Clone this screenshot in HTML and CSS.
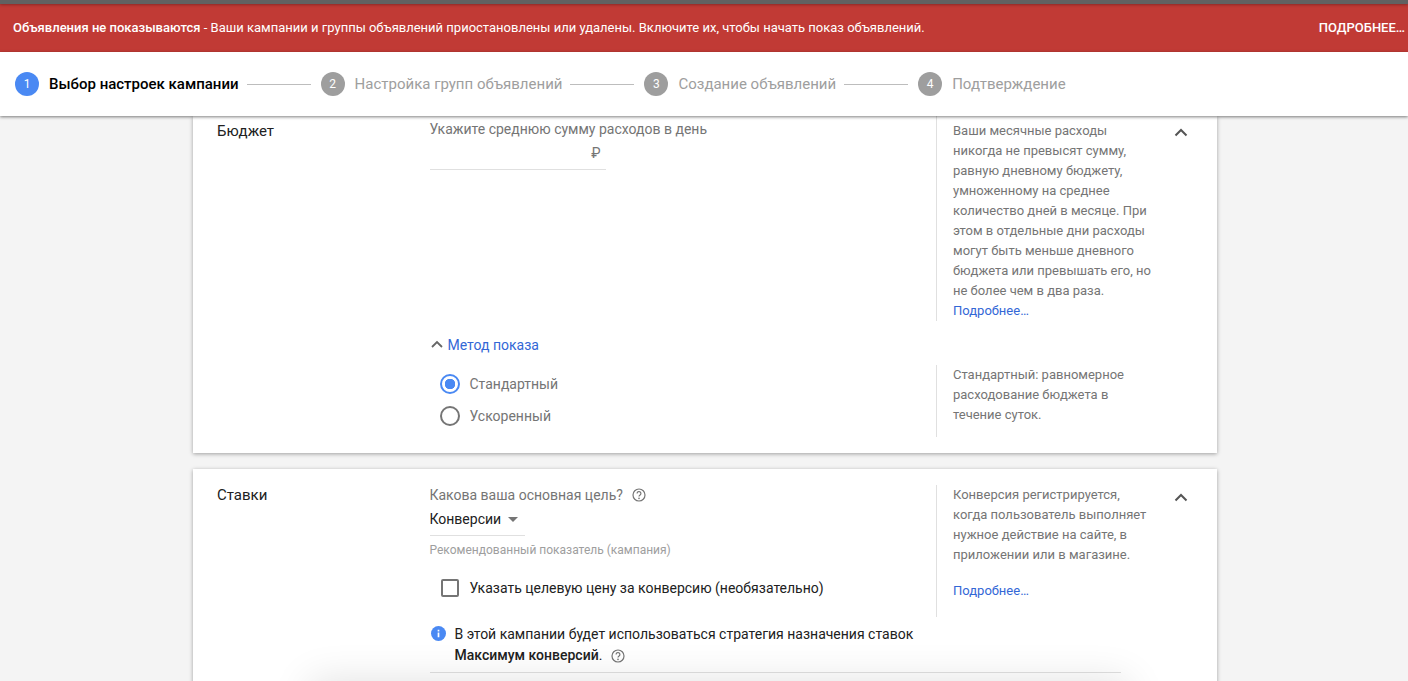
FILE: index.html
```html
<!DOCTYPE html>
<html lang="ru">

<head>
	<meta charset="UTF-8">
	<title>Новая кампания</title>
	<link rel="stylesheet" href="styles.css">
</head>

<body>
	<div class="top-line"></div>
	<div class="alert">
		<div class="alert-text"><b>Объявления не показываются</b> - Ваши кампании и группы объявлений приостановлены или удалены. Включите их, чтобы начать показ объявлений.</div>
		<div class="alert-more">ПОДРОБНЕЕ…</div>
	</div>
	<div class="stepper">
		<div class="step active"><span class="step-num">1</span><span class="step-name">Выбор настроек кампании</span></div>
		<div class="step-line"></div>
		<div class="step"><span class="step-num">2</span><span class="step-name">Настройка групп объявлений</span></div>
		<div class="step-line"></div>
		<div class="step"><span class="step-num">3</span><span class="step-name">Создание объявлений</span></div>
		<div class="step-line"></div>
		<div class="step"><span class="step-num">4</span><span class="step-name">Подтверждение</span></div>
	</div>

	<div class="content">
		<section class="card card-budget">
			<div class="card-title">Бюджет</div>
			<div class="card-body">
				<div class="row">
					<div class="row-main budget-main">
						<div class="field-label">Укажите среднюю сумму расходов в день</div>
						<div class="money-input">₽</div>
					</div>
					<div class="help budget-help">
						Ваши месячные расходы никогда не превысят сумму, равную дневному бюджету, умноженному на среднее количество дней в месяце. При этом в отдельные дни расходы могут быть меньше дневного бюджета или превышать его, но не более чем в два раза.
						<a class="more" href="#">Подробнее…</a>
					</div>
				</div>
				<div class="row method-row">
					<div class="row-main">
						<div class="method-toggle">
							<svg class="chevron-small" width="14" height="9" viewBox="0 0 14 9"><path d="M2 7l5-5 5 5" fill="none" stroke="#666" stroke-width="1.8"/></svg>
							<span>Метод показа</span>
						</div>
					</div>
				</div>
				<div class="row">
					<div class="row-main radios">
						<div class="radio-row"><span class="radio checked"></span>Стандартный</div>
						<div class="radio-row"><span class="radio"></span>Ускоренный</div>
					</div>
					<div class="help method-help">Стандартный: равномерное расходование бюджета в течение суток.</div>
				</div>
			</div>
			<svg class="collapse" width="14" height="9" viewBox="0 0 14 9"><path d="M1.5 7.5L7 2l5.5 5.5" fill="none" stroke="#555" stroke-width="2"/></svg>
		</section>

		<section class="card card-bids">
			<div class="card-title">Ставки</div>
			<div class="card-body">
				<div class="row">
					<div class="row-main goal-main">
						<div class="field-label goal-label">Какова ваша основная цель?
							<svg class="hint" width="14" height="14" viewBox="0 0 14 14"><circle cx="7" cy="7" r="6" fill="none" stroke="#757575" stroke-width="1.2"/><path d="M5.1 5.5a1.9 1.9 0 1 1 3 1.5c-.7.5-1.1.8-1.1 1.6" fill="none" stroke="#757575" stroke-width="1.2"/><circle cx="7" cy="10.4" r=".8" fill="#757575"/></svg>
						</div>
						<div class="select">Конверсии<span class="caret"></span></div>
						<div class="select-note">Рекомендованный показатель (кампания)</div>
						<label class="check-row"><span class="checkbox"></span>Указать целевую цену за конверсию (необязательно)</label>
					</div>
					<div class="help bids-help">
						Конверсия регистрируется, когда пользователь выполняет нужное действие на сайте, в приложении или в магазине.
						<a class="more more-gap" href="#">Подробнее…</a>
					</div>
				</div>
				<div class="strategy">
					<svg class="info" width="15" height="15" viewBox="0 0 16 16"><circle cx="8" cy="8" r="8" fill="#4a89f3"/><rect x="7.1" y="7" width="1.8" height="5" fill="#fff"/><rect x="7.1" y="4" width="1.8" height="1.8" fill="#fff"/></svg>
					<div>В этой кампании будет использоваться стратегия назначения ставок <b>Максимум конверсий</b>.
						<svg class="hint hint-strategy" width="14" height="14" viewBox="0 0 14 14"><circle cx="7" cy="7" r="6" fill="none" stroke="#757575" stroke-width="1.2"/><path d="M5.1 5.5a1.9 1.9 0 1 1 3 1.5c-.7.5-1.1.8-1.1 1.6" fill="none" stroke="#757575" stroke-width="1.2"/><circle cx="7" cy="10.4" r=".8" fill="#757575"/></svg>
					</div>
				</div>
				<div class="divider"></div>
			</div>
			<svg class="collapse" width="14" height="9" viewBox="0 0 14 9"><path d="M1.5 7.5L7 2l5.5 5.5" fill="none" stroke="#555" stroke-width="2"/></svg>
		</section>
		<div class="bottom-shadow"></div>
	</div>
</body>

</html>
```

FILE: styles.css
```css
* {
	box-sizing: border-box;
}

html,
body {
	height: 100%;
	margin: 0;
	overflow: hidden;
}

body {
	display: flex;
	flex-direction: column;
	background-color: #f4f4f4;
	color: #212121;
	font-family: Roboto, "Liberation Sans", sans-serif;
}

a {
	color: #3367d6;
	text-decoration: none;
}

.top-line {
	position: relative;
	z-index: 1;
	flex: none;
	height: 4px;
	background-color: #616161;
	box-shadow: 0 1px 3px rgba(0, 0, 0, .3);
}

.alert {
	display: flex;
	flex: none;
	align-items: center;
	justify-content: space-between;
	height: 48px;
	padding: 0 3px 1px 13px;
	background-color: #c13a35;
	color: #fff;
	font-size: 13px;
}

.alert-text b {
	font-weight: 500;
}

.alert-more {
	font-weight: 500;
}

.stepper {
	position: relative;
	z-index: 2;
	display: flex;
	flex: none;
	align-items: center;
	height: 64px;
	padding: 0 15px;
	background-color: #fff;
	box-shadow: 0 1px 3px rgba(0, 0, 0, .5);
}

.step {
	display: flex;
	align-items: center;
	color: #9e9e9e;
	font-size: 15px;
}

.step-num {
	display: flex;
	align-items: center;
	justify-content: center;
	width: 24px;
	height: 24px;
	margin-right: 10px;
	border-radius: 50%;
	background-color: #9e9e9e;
	color: #fff;
	font-size: 12px;
}

.step.active {
	color: #000;
	font-weight: 500;
}

.step.active .step-num {
	background-color: #4a89f3;
	font-weight: 400;
}

.step-line {
	width: 64px;
	height: 1px;
	margin: 0 10px 0 8px;
	background-color: #bdbdbd;
}

.content {
	position: relative;
	flex: 1;
	overflow: hidden;
}

.card {
	position: relative;
	display: flex;
	width: 1024px;
	margin: 0 0 16px 193px;
	background-color: #fff;
	box-shadow: 0 1px 4px rgba(0, 0, 0, .35);
}

.card-budget {
	height: 337px;
}

.card-bids {
	height: 300px;
}

.card-title {
	width: 236.5px;
	padding-left: 24px;
	font-size: 15px;
}

.card-budget .card-title {
	padding-top: 6px;
}

.card-bids .card-title {
	padding-top: 17px;
}

.row {
	display: flex;
}

.row-main {
	width: 506.5px;
}

.help {
	width: 216px;
	padding-left: 16px;
	border-left: 1px solid #e0e0e0;
	color: #757575;
	font-size: 13px;
	line-height: 20px;
}

.more {
	display: block;
}

.more-gap {
	margin-top: 16px;
}

.budget-main {
	height: 205px;
}

.field-label {
	color: #757575;
	font-size: 14px;
}

.budget-main .field-label {
	padding-top: 5px;
}

.money-input {
	width: 176px;
	height: 33px;
	padding: 8px 5px 0 0;
	border-bottom: 1px solid #e0e0e0;
	color: #757575;
	font-size: 14px;
	text-align: right;
}

.budget-help {
	height: 205px;
	padding-top: 5px;
}

.method-row {
	height: 47px;
	align-items: center;
}

.method-toggle {
	display: flex;
	align-items: center;
	color: #3367d6;
	font-size: 14px;
}

.chevron-small {
	margin-right: 4px;
}

.radios {
	padding-left: 10px;
}

.radio-row {
	display: flex;
	align-items: center;
	height: 32px;
	color: #757575;
	font-size: 14px;
}

.radio {
	width: 20px;
	height: 20px;
	margin-right: 10px;
	border: 2px solid #757575;
	border-radius: 50%;
}

.radio.checked {
	border-color: #4a89f3;
	background: radial-gradient(circle, #4a89f3 0, #4a89f3 5px, #fff 5.5px);
}

.method-help {
	height: 72px;
	margin-top: -3px;
}

.card-bids .card-body {
	padding-top: 16px;
}

.goal-label {
	display: flex;
	align-items: center;
	height: 20px;
}

.hint {
	margin-left: 9px;
}

.select {
	width: 95px;
	height: 31px;
	padding-top: 6px;
	border-bottom: 1px solid #e0e0e0;
	color: #212121;
	font-size: 14px;
}

.caret {
	display: inline-block;
	margin-left: 7px;
	vertical-align: 2px;
	border-top: 5px solid #757575;
	border-right: 5px solid transparent;
	border-left: 5px solid transparent;
}

.select-note {
	margin-top: 7px;
	color: #9e9e9e;
	font-size: 12px;
}

.check-row {
	display: flex;
	align-items: center;
	margin: 22px 0 0 11px;
	color: #212121;
	font-size: 14px;
}

.checkbox {
	width: 18px;
	height: 18px;
	margin-right: 11px;
	border: 2px solid #757575;
	border-radius: 2px;
}

.bids-help {
	height: 132px;
}

.strategy {
	display: flex;
	gap: 9px;
	width: 500px;
	margin-top: 7px;
	padding-left: 1px;
	color: #212121;
	font-size: 14px;
	line-height: 21px;
}

.strategy b {
	font-weight: 500;
}

.info {
	flex: none;
	margin-top: 2px;
}

.hint-strategy {
	margin-left: 5px;
	vertical-align: -3px;
}

.divider {
	width: 691px;
	height: 1px;
	margin-top: 6px;
	background-color: #e0e0e0;
}

.collapse {
	position: absolute;
	top: 12px;
	left: 981px;
}

.card-bids .collapse {
	top: 24px;
}

.bottom-shadow {
	position: absolute;
	right: 290px;
	bottom: -40px;
	left: 320px;
	height: 30px;
	box-shadow: 0 0 40px 10px rgba(0, 0, 0, .12);
}
```
